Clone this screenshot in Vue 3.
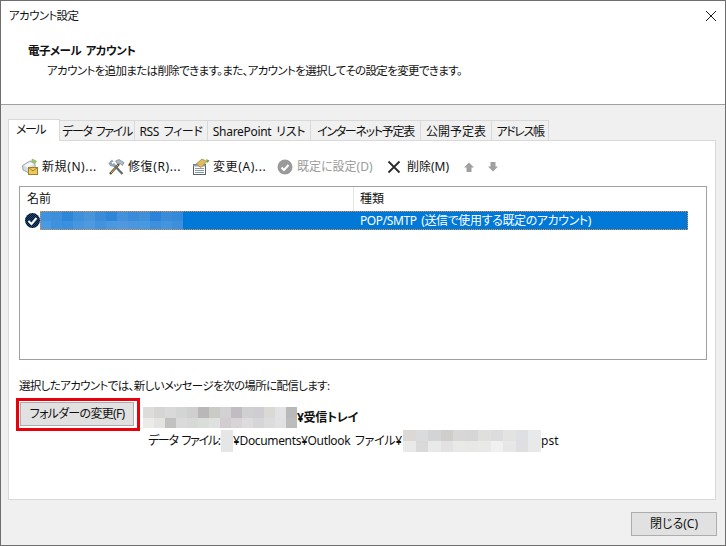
<script setup>
const tabs = [
  { label: 'メール', w: 52, ls: -1.5, active: true },
  { label: 'データ ファイル', w: 75, ls: -1.3 },
  { label: 'RSS フィード', w: 73, ls: -0.4 },
  { label: 'SharePoint リスト', w: 103, ls: -0.3 },
  { label: 'インターネット予定表', w: 110, ls: -1.3 },
  { label: '公開予定表', w: 71, ls: 0 },
  { label: 'アドレス帳', w: 57, ls: -1.4 }
]
const blue = ['#3f93de','#3d8fdc','#2e86d9','#3e90db','#4a95da','#3a8cdb','#2f86d8','#4391da','#3a8cda','#3f8fdb','#2a83d8','#3a8cda','#348ad9',
  '#4a9ae3','#3d92e0','#3890df','#4797e0','#4e9ae0','#4193df','#4a98e0','#5098df','#4a97e0','#469ae2','#3d90de','#4295df','#3b8fdd']
const pathBlur = ['#dedcda','#d5d5d5','#dad9da','#d3d4d4','#cfcfcf','#b9b7b8','#c9cbc4','#d3d2d2','#c0bcc2','#d0cfd1','#cfcdd2','#dad9d3','#e0e2e4','#b9b9b9',
  '#ecebe8','#e4e3e1','#c1c1c1','#dbdada','#d8d8d7','#dbdddb','#dfe1e0','#d1cdd1','#d7d3d7','#dddbde','#d6d5d7','#dcdcdc','#e1e1e3','#bcbcbc']
const fileBlur = ['#dcd8d6','#d9dbdd','#d3d4d5','#cfcecc','#d8d6d7','#d6d6d7','#dfdfde','#dcdcde','#e3e3e2','#dedfe2','#e8e9ea',
  '#e9e9e8','#d9d9d9','#e9e9e9','#e3e1e1','#e9e9e8','#e8e8e7','#e9e9e8','#f1eff0','#e8e7e8','#dfdfe1','#e9e9ea']
</script>

<template>
  <div class="window">
    <div class="titlebar">
      <span class="tight">アカウント設定</span>
      <svg class="close" width="10" height="10" viewBox="0 0 10 10"><path d="M0 0L10 10M10 0L0 10" stroke="#1a1a1a" fill="none"/></svg>
    </div>
    <header class="head">
      <div class="head-title">電子メール アカウント</div>
      <div class="head-sub tight">アカウントを追加または削除できます。また、アカウントを選択してその設定を変更できます。</div>
    </header>
    <main class="body">
      <div class="tabs">
        <div v-for="t in tabs" :key="t.label" class="tab" :class="{ active: t.active }" :style="{ width: t.w + 'px', letterSpacing: t.ls + 'px' }">{{ t.label }}</div>
      </div>
      <section class="panel">
        <div class="toolbar">
          <div class="tool" style="width:86px">
            <svg width="18" height="19" viewBox="0 0 18 19">
              <path d="M1.500 8.500L9 4l5 2.500V13l-6 3-6-3z" fill="#d5dcdf" stroke="#9aa5aa"/>
              <path d="M3 8.500L9 5l4 2-6 4z" fill="#f4f6f7"/>
              <path d="M11 1.500l5 2.500-2 3-4-2z" fill="#9cc16f"/>
              <rect x="7.500" y="10.500" width="9" height="7" fill="#f1c95d" stroke="#a07f2b"/>
              <path d="M7.500 10.500l4.500 3.500 4.500-3.500" fill="none" stroke="#a07f2b"/>
            </svg>
            <span class="wide">新規(N)...</span>
          </div>
          <div class="tool" style="width:85px">
            <svg width="18" height="18" viewBox="0 0 18 18">
              <path d="M3 16L12 6" stroke="#5a4a2c" stroke-width="2.400"/>
              <path d="M4 15L11 7" stroke="#e3bb55" stroke-width="1"/>
              <path d="M15.500 16L6 6" stroke="#5e6a74" stroke-width="2.200"/>
              <path d="M1.500 5L5 1.500l1.500 2-2 1 1 2 2-1 1.500 2L7 9 3 8z" fill="#8fa6b8"/>
              <path d="M8.500 3L12 1.500l5 3-1.500 3L13 5.500 10.500 6z" fill="#aebcc7" stroke="#6a7883" stroke-width=".6"/>
            </svg>
            <span class="wide">修復(R)...</span>
          </div>
          <div class="tool" style="width:85px">
            <svg width="18" height="18" viewBox="0 0 18 18">
              <rect x="1.500" y="6.500" width="12" height="10" fill="#fff" stroke="#59636b"/>
              <path d="M1.500 6.500h12v2h-12z" fill="#8fa4b5"/>
              <path d="M3 10.500h9M3 12.500h9M3 14.500h9" stroke="#8b99a3"/>
              <path d="M4 6l6-5 5 2.500-6 6z" fill="#dfbb5f" stroke="#8f7430" stroke-width=".6"/>
              <path d="M14 1l3.500 1.500-2 2.500z" fill="#6aa53f"/>
            </svg>
            <span class="wide">変更(A)...</span>
          </div>
          <div class="tool disabled" style="width:110px">
            <svg width="16" height="16" viewBox="0 0 16 16">
              <circle cx="8" cy="8" r="7.500" fill="#9a9a9a"/>
              <path d="M4.500 8.500l2.500 2.500 4.500-5" fill="none" stroke="#fff" stroke-width="2"/>
            </svg>
            <span>既定に設定(D)</span>
          </div>
          <div class="tool delete" style="width:75px">
            <svg width="14" height="14" viewBox="0 0 14 14"><path d="M1.500 1.500L12.500 12.500M12.500 1.500L1.500 12.500" stroke="#2b2b2b" stroke-width="1.800" fill="none"/></svg>
            <span>削除(M)</span>
          </div>
          <svg class="arrow" width="12" height="12" viewBox="0 0 12 12"><path d="M6 1.500L11 6.500H8.500V11h-5V6.500H1z" fill="#a0a0a0"/></svg>
          <svg class="arrow second" width="12" height="12" viewBox="0 0 12 12"><path d="M6 10.500L11 5.500H8.500V1h-5v4.500H1z" fill="#a0a0a0"/></svg>
        </div>
        <div class="list">
          <div class="list-head">
            <div class="col-a">名前</div>
            <div class="col-b">種類</div>
          </div>
          <div class="row">
            <svg class="default-mark" width="15" height="15" viewBox="0 0 15 15">
              <defs>
                <pattern id="dither" width="2" height="2" patternUnits="userSpaceOnUse">
                  <rect width="2" height="2" fill="#0b0b0b"/>
                  <rect width="1" height="1" fill="#0a4f96"/>
                  <rect x="1" y="1" width="1" height="1" fill="#0a4f96"/>
                </pattern>
              </defs>
              <circle cx="7.500" cy="7.500" r="7.500" fill="url(#dither)"/>
              <path d="M3.500 8l3 3 5-6" fill="none" stroke="#fff" stroke-width="2"/>
            </svg>
            <div class="selected">
              <div class="name-blur">
                <i v-for="(c, i) in blue" :key="i" :style="{ background: c }"></i>
              </div>
              <div class="type">POP/SMTP (送信で使用する既定のアカウント)</div>
            </div>
          </div>
        </div>
        <p class="note tight">選択したアカウントでは、新しいメッセージを次の場所に配信します:</p>
        <div class="deliver">
          <div class="highlight"><button class="btn folder">フォルダーの変更(F)</button></div>
          <div class="paths">
            <div class="path-main">
              <div class="blur-a"><i v-for="(c, i) in pathBlur" :key="i" :style="{ background: c }"></i></div>
              <b>¥受信トレイ</b>
            </div>
            <div class="path-file">
              <span class="data-label">データ ファイル:</span>
              <i class="blur-short"></i>
              <span class="docs">¥Documents¥Outlook ファイル¥</span>
              <div class="blur-b"><i v-for="(c, i) in fileBlur" :key="i" :style="{ background: c }"></i></div>
              <span>pst</span>
            </div>
          </div>
        </div>
      </section>
      <footer class="foot"><button class="btn close-btn">閉じる(C)</button></footer>
    </main>
  </div>
</template>

<style>
html, body { margin: 0; background: #f0f0f0; }
</style>

<style scoped>
.window {
  width: 726px;
  height: 546px;
  box-sizing: border-box;
  border: 1px solid #6e6e6e;
  display: flex;
  flex-direction: column;
  background: #f0f0f0;
  color: #111;
  font: 12px/16px "Noto Sans", "Noto Sans CJK JP", sans-serif;
  font-feature-settings: "palt";
  word-spacing: 2px;
  overflow: hidden;
}
.tight { font-size: 11.500px; letter-spacing: -0.640px; }
.titlebar {
  height: 30px;
  background: #fff;
  display: flex;
  align-items: center;
  justify-content: space-between;
  padding: 0 9px 0 8px;
  flex: none;
}
.head {
  box-sizing: border-box;
  height: 74px;
  background: #fff;
  border-bottom: 1px solid #a0a0a0;
  padding: 12px 0 0 27px;
  flex: none;
}
.head-title { font-weight: 700; line-height: 16px; font-size: 11.500px; letter-spacing: -0.500px; }
.head-sub { margin: 4px 0 0 19px; line-height: 16px; white-space: nowrap; }
.body { flex: 1; display: flex; flex-direction: column; padding: 15px 9px 0 7px; min-height: 0; }
.tabs { display: flex; height: 20px; align-items: flex-end; flex: none; }
.tab {
  box-sizing: border-box;
  height: 20px;
  border: 1px solid #d9d9d9;
  border-bottom: 0;
  border-left-width: 0;
  background: #f0f0f0;
  text-align: center;
  line-height: 21px;
  white-space: nowrap;
}
.tab:first-child { border-left-width: 1px; }
.tab.active {
  height: 22px;
  margin-bottom: -1px;
  background: #fff;
  position: relative;
  z-index: 1;
  text-align: left;
  padding-left: 7px;
  line-height: 19px;
}
.panel {
  box-sizing: border-box;
  height: 360px;
  border: 1px solid #d9d9d9;
  background: #fff;
  padding: 0 8px 0 10px;
  flex: none;
}
.toolbar { box-sizing: border-box; display: flex; align-items: center; height: 45px; padding: 6px 0 0 2px; }
.tool { display: flex; align-items: center; gap: 3px; white-space: nowrap; flex: none; }
.wide { letter-spacing: 0.600px; }
.tool.disabled { color: #9a9a9a; gap: 4px; }
.tool.delete { gap: 6px; }
.arrow { margin-left: 1px; flex: none; }
.arrow.second { margin-left: 12px; }
.list { box-sizing: border-box; height: 174px; border: 1px solid #a0a0a0; }
.list-head { display: flex; height: 24px; }
.col-a { width: 326px; padding: 4px 0 0 7px; border-right: 1px solid #e5e5e5; }
.col-b { padding: 4px 0 0 6px; }
.row { display: flex; align-items: center; height: 19px; padding-left: 5px; }
.default-mark { flex: none; }
.selected {
  flex: 1;
  height: 19px;
  margin-right: 18px;
  background: #0078d7;
  color: #fff;
  display: flex;
  outline: 1px dotted #e98a3c;
  outline-offset: -1px;
}
.name-blur { width: 314px; display: grid; grid-template-columns: repeat(13, 11px); grid-auto-rows: 9.500px; flex: none; }
.name-blur i, .blur-a i, .blur-b i { display: block; }
.type { line-height: 19px; padding-left: 6px; white-space: nowrap; letter-spacing: -0.400px; }
.note { margin: 18px 0 0 0; line-height: 16px; white-space: nowrap; }
.deliver { display: flex; align-items: flex-start; margin: 4px 0 0 -3px; }
.highlight { box-sizing: border-box; width: 124px; height: 33px; border: 3px solid #e8000b; padding: 1px 0 0 1px; flex: none; }
.btn {
  box-sizing: border-box;
  border: 1px solid #adadad;
  background: #e1e1e1;
  font: inherit;
  font-feature-settings: "palt";
  color: inherit;
  padding: 0;
}
.folder { width: 114px; height: 24px; letter-spacing: -0.700px; }
.paths { margin-left: 3px; padding-top: 9px; }
.path-main { display: flex; align-items: center; height: 21px; }
.blur-a { display: grid; grid-template-columns: repeat(14, 11px); grid-auto-rows: 10.500px; width: 154px; height: 21px; }
.path-main b { font-weight: 700; white-space: nowrap; letter-spacing: -0.300px; }
.path-file { display: flex; align-items: center; height: 22px; margin: 2px 0 0 5px; white-space: nowrap; }
.data-label { letter-spacing: -1.300px; width: 73px; flex: none; }
.blur-short { width: 12px; height: 22px; background: #e6e6e6; flex: none; }
.docs { width: 170px; letter-spacing: -0.350px; flex: none; }
.blur-b { display: grid; grid-template-columns: repeat(11, 12.500px); grid-auto-rows: 11px; width: 138px; height: 22px; flex: none; }
.foot { flex: 1; display: flex; justify-content: flex-end; align-items: flex-start; padding: 12px 0 0 0; }
.close-btn { width: 86px; height: 24px; margin-right: -1px; }
.close { flex: none; }
</style>
